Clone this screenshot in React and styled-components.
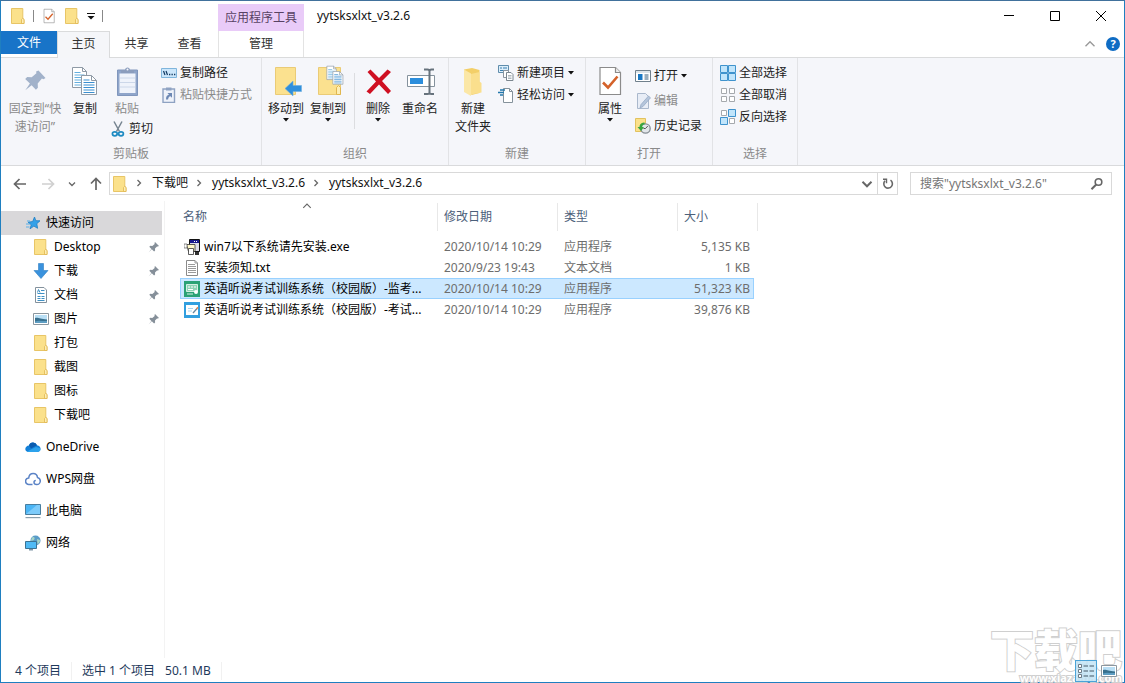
import { useState } from "react";
import styled, { createGlobalStyle, css } from "styled-components";

const GlobalStyle = createGlobalStyle`
  * {
    box-sizing: border-box;
  }
  body {
    margin: 0;
    background: #fff;
    color: #111;
    font: 12px/18px "Noto Sans", "Noto Sans CJK SC", sans-serif;
  }
  button {
    margin: 0;
    padding: 0;
    border: none;
    background: none;
    color: inherit;
    font: inherit;
  }
  svg {
    display: block;
    flex: none;
  }
`;

/* ---------- icons ---------- */

const FolderIcon = ({ size = 16 }) => (
  <svg width={size} height={size} viewBox="0 0 16 16">
    <path d="M1.5.5h11.3v10l1.2.8v4.2H1.5z" fill="#fbe18b" stroke="#e8c566" />
    <path d="M11.5 15.5v-4l1.2-1.2 1.3 1.2v4z" fill="#fdeeb5" stroke="#e0b64f" strokeWidth=".8" />
  </svg>
);

const PropsIcon = ({ size = 16 }) => (
  <svg width={size} height={size} viewBox="0 0 32 32">
    <path d="M6 2.500h15.500l5 5v22H6z" fill="#fff" stroke="#8b8b8b" strokeWidth="1.200" />
    <path d="M21.500 2.500v5h5" fill="#eee" stroke="#8b8b8b" strokeWidth="1.200" />
    <path d="M9 17.500l5 5 9.500-11" fill="none" stroke="#d4622a" strokeWidth="2.600" />
  </svg>
);

const CaretIcon = () => (
  <svg width="6" height="4" viewBox="0 0 6 4">
    <path d="M0 0h6L3 3.500z" fill="#111" />
  </svg>
);

const PinBigIcon = () => (
  <svg width="32" height="32" viewBox="0 0 32 32">
    <path d="M19.5 5.5l7 7.5-2 1.2-1.6-.6-4.2 5 .2 4.2-2 2-4.3-4.6-6.3 5 4.6-6.8-4.7-4.3 2-2 4.5.1 4.7-4-.3-1.7z" fill="#a2b2ca" />
  </svg>
);

const CopyPages = () => (
  <>
    <path d="M3.5 2.5h10l4 4v16h-14z" fill="#fff" stroke="#8f9aa6" />
    <path d="M13.5 2.5v4h4" fill="none" stroke="#8f9aa6" />
    <path d="M5.500 7.500h6M5.500 10h10M5.500 12.500h10M5.500 15h10M5.500 17.500h10M5.500 20h10" stroke="#64aede" />
    <path d="M12.500 10.500h10l5 5v14h-15z" fill="#fff" stroke="#8f9aa6" />
    <path d="M22.500 10.500v5h5" fill="none" stroke="#8f9aa6" />
    <path d="M14.500 15h6M14.500 17.500h11M14.500 20h11M14.500 22.500h11M14.500 25h11M14.500 27.500h11" stroke="#3b8fd0" />
  </>
);

const CopyIcon = () => (
  <svg width="32" height="32" viewBox="0 0 32 32"><CopyPages /></svg>
);

const PasteIcon = () => (
  <svg width="32" height="32" viewBox="0 0 32 32">
    <path d="M6.500 5h20v25.500h-20z" fill="#8fa5ca" stroke="#8096bc" />
    <path d="M8.500 8.500h16v19.500h-16z" fill="#eff3fb" />
    <path d="M9 13h15M9 17.500h15M9 22h15" stroke="#ccd7e9" />
    <path d="M10 8V5h4c0-3.500 5-3.500 5 0h4v3z" fill="#8b9dbd" />
    <circle cx="16.500" cy="4.500" r="1" fill="#f5f6fa" />
  </svg>
);

const CutIcon = () => (
  <svg width="16" height="16" viewBox="0 0 16 16" fill="none">
    <path d="M4 .5l5.500 10M12 .5L6.500 10.500" stroke="#75838f" strokeWidth="1.500" />
    <ellipse cx="4.800" cy="12.800" rx="2.400" ry="2" stroke="#1f8bc2" strokeWidth="1.700" />
    <ellipse cx="11" cy="12.800" rx="2.400" ry="2" stroke="#1f8bc2" strokeWidth="1.700" />
  </svg>
);

const CopyPathIcon = () => (
  <svg width="16" height="16" viewBox="0 0 16 16">
    <path d="M.5 3.500h15v9H.5z" fill="#cbe6fb" stroke="#7fb5dc" />
    <path d="M2.500 6l1.500 4M5 6l1.500 4" stroke="#123a63" strokeWidth="1.200" />
    <path d="M8 9.500h1.300M10.500 9.500h1.300M13 9.500h1.300" stroke="#123a63" strokeWidth="1.300" />
  </svg>
);

const PasteLinkIcon = () => (
  <svg width="16" height="16" viewBox="0 0 16 16">
    <path d="M2 2h11.500v13.500H2z" fill="#eef2fa" stroke="#8ea2c2" strokeWidth="1.400" />
    <path d="M5 .5h5.500v3H5z" fill="#8ea2c2" />
    <path d="M5 12.500c0-3 1-4.500 3-4.700L6.500 6H11v4.800L9.500 9.300c-1.500.3-2.200 1.300-2.400 3.200z" fill="#6d88b4" />
  </svg>
);

const MoveToIcon = () => (
  <svg width="34" height="32" viewBox="0 0 34 32">
    <path d="M6.500 2.500h20v27h-20z" fill="#fbe18f" stroke="#eacb76" />
    <path d="M16 23.500l8-7.500v4.500h8.500v6H24V31z" fill="#2f8fdc" stroke="#6eafdf" strokeWidth=".6" />
  </svg>
);

const CopyToIcon = () => (
  <svg width="32" height="32" viewBox="0 0 32 32">
    <path d="M6.500 2.500h22v27h-22z" fill="#fbe18f" stroke="#eacb76" />
    <path d="M24.500 29.500v-7l2-2 2 2v7z" fill="#fdeeb5" stroke="#e0b64f" />
    <g transform="translate(12.500 -.5) scale(.67)"><CopyPages /></g>
  </svg>
);

const DeleteIcon = () => (
  <svg width="32" height="32" viewBox="0 0 32 32">
    <path d="M5.500 7l3-2.500L17 13l8.500-8.500L29 7l-9 9 9 10-3 3-9-9.500L8 29l-3.500-2.500 9.500-10z" fill="#cf1022" />
  </svg>
);

const RenameIcon = () => (
  <svg width="32" height="32" viewBox="0 0 32 32" fill="none">
    <path d="M3.500 10.500h27v11h-27z" fill="#fff" stroke="#85929d" />
    <path d="M6 13h13v6H6z" fill="#2b8ddc" />
    <path d="M20 4.500h3.500c1.500 0 2 .5 2 1.500 0-1 .5-1.500 2-1.500H30M20 29h3.500c1.500 0 2-.5 2-1.500 0 1 .5 1.500 2 1.500H30M25.500 6v22" stroke="#66727c" strokeWidth="2" />
  </svg>
);

const NewFolderIcon = () => (
  <svg width="32" height="32" viewBox="0 0 32 32">
    <path d="M7 4.500l8-1.500 7.500 2v23l-8 2z" fill="#f3cf68" />
    <path d="M7 4.500l7 4V31l-7-4z" fill="#fbe7a6" />
    <path d="M14 9l8.500-2v9.500l2 1.500v9.500L14 29.500z" fill="#fadf8d" />
  </svg>
);

const NewItemIcon = () => (
  <svg width="16" height="16" viewBox="0 0 16 16">
    <path d="M.5.500h10v7H.5z" fill="#dceefa" stroke="#5f8dac" />
    <path d="M2 3h2M5 3h4M2 5.500h6" stroke="#3b7fb0" />
    <path d="M5.500 5.500h5v7h-5z" fill="#fff" stroke="#8b959e" />
    <path d="M8.500 7.500h4.500l2 2v6H8.500z" fill="#fff" stroke="#7b868f" />
    <path d="M10 10.500h3.500M10 12h3.500M10 13.500h3.500" stroke="#9aa4ac" strokeWidth=".8" />
  </svg>
);

const EasyAccessIcon = () => (
  <svg width="16" height="16" viewBox="0 0 16 16">
    <path d="M5.500 1.500h6l3 3v11h-9z" fill="#fff" stroke="#85929b" />
    <path d="M11.500 1.500v3h3" fill="none" stroke="#85929b" />
    <path d="M2 3h5M0 5.500h6M2 8h3" stroke="#2478ac" strokeWidth="1.300" />
  </svg>
);

const OpenIcon = () => (
  <svg width="16" height="16" viewBox="0 0 16 16">
    <path d="M.5 2.500h15v11H.5z" fill="#fff" stroke="#70808c" />
    <path d="M1 3h14v2H1z" fill="#dbe3e9" />
    <path d="M3 6h4.500v6H3z" fill="#1878c4" />
    <path d="M9.500 7h4M9.500 9h4M9.500 11h4" stroke="#335d7c" />
  </svg>
);

const EditIcon = () => (
  <svg width="16" height="16" viewBox="0 0 16 16">
    <path d="M2.500.500h8l3 3v12h-11z" fill="#e8edf6" stroke="#aab8cc" />
    <path d="M5 15l1-3.500L13.500 3l2 1.800L8 13.500z" fill="#b5c5db" stroke="#8fa5c2" strokeWidth=".7" />
  </svg>
);

const HistoryIcon = () => (
  <svg width="16" height="16" viewBox="0 0 16 16" fill="none">
    <path d="M.5.500h10v13H.5z" fill="#fbe18b" stroke="#e2c25e" />
    <circle cx="10.500" cy="10.500" r="4.700" fill="#e2e6ea" stroke="#858d94" strokeWidth="1.300" />
    <path d="M10.500 10.500l2.300-2.500M10.500 10.500h-2" stroke="#555" />
    <path d="M9.500 4.500c-3.500-.3-5 2-5 4.500H2.500l3.500 4 3-4H7.200c0-2 1-2.800 2.600-2.800z" fill="#37a53f" />
  </svg>
);

const squares = [[0, 0], [8, 0], [0, 8], [8, 8]];
const SelectIcon = ({ on }) => (
  <svg width="16" height="16" viewBox="0 0 16 16">
    {squares.map(([x, y], i) =>
      on[i] ? (
        <path key={i} d={`M${x + 0.5} ${y + 0.5}h7v7h-7z`} fill="#c1e5fb" stroke="#3f93cd" />
      ) : (
        <path key={i} d={`M${x + 1.5} ${y + 1.5}h5v5h-5z`} fill="#fff" stroke="#a5a9ad" />
      )
    )}
  </svg>
);

const ArrowIcon = ({ turn = 0, color = "#666" }) => (
  <svg width="16" height="16" viewBox="0 0 16 16">
    <path transform={`rotate(${turn} 8 8)`} d="M14 8H3M7.500 3L2.500 8l5 5" fill="none" stroke={color} strokeWidth="1.700" />
  </svg>
);

const ChevronIcon = ({ turn = 0, color = "#666", width = 1.3, size = 8 }) => (
  <svg width={size} height={size} viewBox="0 0 8 8">
    <path transform={`rotate(${turn} 4 4)`} d="M1 2.500l3 3 3-3" fill="none" stroke={color} strokeWidth={width} />
  </svg>
);

const RefreshIcon = () => (
  <svg width="14" height="14" viewBox="0 0 14 14" fill="none" stroke="#666" strokeWidth="1.600">
    <path d="M9.500 3.200A4.300 4.300 0 1 1 4 3.800" />
    <path d="M2 2.200h3.500v4" strokeWidth="1.400" />
  </svg>
);

const SearchIcon = () => (
  <svg width="14" height="14" viewBox="0 0 14 14" fill="none" stroke="#666">
    <circle cx="8.500" cy="5" r="3.300" strokeWidth="1.600" />
    <path d="M6.200 7.500L1.500 12.300" strokeWidth="2" />
  </svg>
);

const StarIcon = () => (
  <svg width="16" height="16" viewBox="0 0 16 16">
    <path d="M9.500 2l1.300 3.700 4.200.1-3.200 2.900.8 4.600-3.700-2.200L5 13.800l1.300-4L3 7.300l4.700-.8z" fill="#35a1e8" stroke="#1f7fc4" strokeWidth=".8" />
    <path d="M2 6h3M1 9h4M1 12h3.500" stroke="#5cb0e8" />
  </svg>
);

const PinIcon = () => (
  <svg width="12" height="12" viewBox="0 0 12 12">
    <path d="M7 1l4 4-1.200.6-.8-.2-2 2.200.1 2-1 1-2.300-2.300L.8 11.200l2.600-3.300L1.300 5.800l1-1 2 .1 2.400-2-.2-.9z" fill="#858f99" />
  </svg>
);

const DownloadIcon = () => (
  <svg width="16" height="16" viewBox="0 0 16 16">
    <path d="M5.500.500h5v7h4.500L8 15.500 1 7.500h4.500z" fill="#3a92dd" stroke="#2d7dc2" strokeWidth=".6" />
  </svg>
);

const DocumentIcon = () => (
  <svg width="16" height="16" viewBox="0 0 16 16">
    <path d="M2.500.500h8.500l2.500 2.500v12.500h-11z" fill="#fff" stroke="#83919c" />
    <path d="M8 3.500h3.500M4.500 6.500h7M4.500 9.500h3M4.500 11.500h3M4.500 13.500h7M8.500 9.500h3M8.500 11.500h3" stroke="#3f90c4" />
    <path d="M4.500 5.500l1-3 1.500 3" fill="none" stroke="#3f90c4" />
  </svg>
);

const PictureIcon = () => (
  <svg width="16" height="16" viewBox="0 0 16 16">
    <path d="M.5 2.500h15v11H.5z" fill="#fff" stroke="#8b979f" />
    <path d="M2 4h12v8H2z" fill="#b9dff5" />
    <path d="M2 7c3-1 5 1 12 1.500V12H2z" fill="#38708e" />
    <path d="M2 10.500c4-1.500 8 0 12-.5v2H2z" fill="#5d9dc2" />
  </svg>
);

const OneDriveIcon = () => (
  <svg width="16" height="16" viewBox="0 0 16 16">
    <path d="M4 6.500a4.200 4.200 0 0 1 8-.3c2.300.2 3.500 1.800 3.500 3.600 0 2-1.500 3.200-3.300 3.200H3.500C1.500 13 .3 11.600.3 10S1.800 6.600 4 6.500z" fill="#1380d8" />
    <path d="M4 6.500a4.200 4.200 0 0 1 8-.3L6 9.500z" fill="#0b5cb0" />
    <path d="M2 12.500L11 8c2.500.5 4.500 1 4.500 2 0 1.800-1.500 3-3.300 3H3.500c-.6 0-1-.2-1.500-.5z" fill="#2ca2ec" />
  </svg>
);

const WpsIcon = () => (
  <svg width="16" height="16" viewBox="0 0 16 16" fill="none" stroke="#5b83c6" strokeWidth="1.500">
    <path d="M7.500 13.500H4A3.200 3.200 0 0 1 3.700 7C4 4 6 2.500 8.200 2.500c2.300 0 4 1.600 4.300 4 1.800.4 2.800 1.700 2.800 3.400 0 2-1.600 3.600-3.600 3.600-1.700 0-2.700-1-2.700-2.300 0-1.200.8-1.800 1.800-1.800" />
  </svg>
);

const PcIcon = () => (
  <svg width="16" height="16" viewBox="0 0 16 16">
    <path d="M.5 1.500h15v10H.5z" fill="#4bb5f5" stroke="#497e9f" />
    <path d="M1 11L12 2h3v9z" fill="#7dcbfa" />
    <path d="M.5 14h15v1.200H.5z" fill="#8ca0ad" />
  </svg>
);

const NetworkIcon = () => (
  <svg width="16" height="16" viewBox="0 0 16 16">
    <circle cx="10.500" cy="5.500" r="5" fill="#5a9cc8" />
    <path d="M7 2.500c2-1.500 3 0 2.500 1.500S7 6 6 5.500zM12 4l3 1c0 2-1 3.500-2.500 4z" fill="#a8d5c5" />
    <path d="M.5 6.500h11v7H.5z" fill="#4fbaf5" stroke="#3b7394" />
    <path d="M4 14h4v1.500H4z" fill="#8097a6" />
  </svg>
);

const SetupIcon = () => (
  <svg width="16" height="16" viewBox="0 0 16 16">
    <path d="M5.500.500h10v12h-10z" fill="#dcdce6" stroke="#111" />
    <path d="M6 1h9v3H6z" fill="#17178c" />
    <path d="M10 2.500h1M12 2.500h1" stroke="#fff" />
    <path d="M2.500 5.500h8.500v7H4.500z" fill="#fff8c9" stroke="#333" strokeWidth=".8" />
    <path d="M0 5h3v4H0z" fill="#fff" stroke="#444" strokeWidth=".6" />
    <path d="M4.500 9.500h5v6h-5z" fill="#fff" stroke="#333" strokeWidth=".8" />
    <path d="M11 13h4v3h-4z" fill="#333" />
  </svg>
);

const TextFileIcon = () => (
  <svg width="16" height="16" viewBox="0 0 16 16">
    <path d="M2.500.500h8.500l2.500 2.500v12.500h-11z" fill="#fff" stroke="#8a8a8a" />
    <path d="M11 .5V3h2.500M4 4.500h7M4 6.500h8M4 8.500h8M4 10.500h8M4 12.500h8" fill="none" stroke="#9a9a9a" />
  </svg>
);

const TeacherIcon = () => (
  <svg width="16" height="16" viewBox="0 0 16 16">
    <path d="M0 0h16v16H0z" fill="#2ba275" />
    <path d="M2.500 3.500h11v7h-11z" fill="#8fd3b5" stroke="#d5f0e3" />
    <path d="M4 6h2M7 6h2M10 6h2M4 8.500h5" stroke="#fff" />
    <path d="M3 13h6" stroke="#d9f2e6" />
    <circle cx="12" cy="11" r="2" fill="#fff" />
  </svg>
);

const StudentIcon = () => (
  <svg width="16" height="16" viewBox="0 0 16 16">
    <path d="M0 0h16v16H0z" fill="#329fdf" />
    <path d="M2 3h12v10H2z" fill="#fff" />
    <path d="M4 6.500h5M4 9h4" stroke="#a9d5ef" />
    <path d="M9 11l4-4.500" stroke="#6687a0" strokeWidth="1.300" />
    <path d="M12.500 7l1.500-1.700" stroke="#e5814d" strokeWidth="1.500" />
  </svg>
);

const DetailsIcon = () => (
  <svg width="18" height="16" viewBox="0 0 18 16">
    {[1, 6, 11].map((y) => (
      <g key={y}>
        <path d={`M1.5 ${y + 0.5}h3v3h-3z`} fill="#fff" stroke="#6d7c88" />
        <path d={`M6.5 ${y + 2}h4.500M12.500 ${y + 2}h4.500`} stroke="#445867" />
      </g>
    ))}
  </svg>
);

/* ---------- data ---------- */

const quickItems = [
  { name: "Desktop", icon: <FolderIcon />, pinned: true },
  { name: "下载", icon: <DownloadIcon />, pinned: true },
  { name: "文档", icon: <DocumentIcon />, pinned: true },
  { name: "图片", icon: <PictureIcon />, pinned: true },
  { name: "打包", icon: <FolderIcon /> },
  { name: "截图", icon: <FolderIcon /> },
  { name: "图标", icon: <FolderIcon /> },
  { name: "下载吧", icon: <FolderIcon /> },
];

const places = [
  { name: "OneDrive", icon: <OneDriveIcon /> },
  { name: "WPS网盘", icon: <WpsIcon /> },
  { name: "此电脑", icon: <PcIcon /> },
  { name: "网络", icon: <NetworkIcon /> },
];

const files = [
  { name: "win7以下系统请先安装.exe", date: "2020/10/14 10:29", type: "应用程序", size: "5,135 KB", icon: <SetupIcon /> },
  { name: "安装须知.txt", date: "2020/9/23 19:43", type: "文本文档", size: "1 KB", icon: <TextFileIcon /> },
  { name: "英语听说考试训练系统（校园版）-监考...", date: "2020/10/14 10:29", type: "应用程序", size: "51,323 KB", icon: <TeacherIcon /> },
  { name: "英语听说考试训练系统（校园版）-考试...", date: "2020/10/14 10:29", type: "应用程序", size: "39,876 KB", icon: <StudentIcon /> },
];

const crumbs = ["下载吧", "yytsksxlxt_v3.2.6", "yytsksxlxt_v3.2.6"];

const Big = ({ icon, label, caret, disabled }) => (
  <BigButton type="button" disabled={disabled}>
    {icon}
    <span>{label}</span>
    {caret && <CaretIcon />}
  </BigButton>
);

const Small = ({ icon, label, caret, disabled }) => (
  <SmallButton type="button" disabled={disabled}>
    {icon}
    <span>{label}</span>
    {caret && <CaretIcon />}
  </SmallButton>
);

const App = () => {
  const [selected, setSelected] = useState(2);
  const [search, setSearch] = useState("");

  return (
    <Window>
      <GlobalStyle />
      <TitleBar>
        <QuickAccess>
          <FolderIcon />
          <QuickLine />
          <IconButton type="button" aria-label="属性"><PropsIcon /></IconButton>
          <IconButton type="button" aria-label="新建文件夹"><FolderIcon /></IconButton>
          <IconButton type="button" aria-label="自定义快速访问工具栏">
            <svg width="8" height="8" viewBox="0 0 8 8">
              <path d="M0 1.500h8" stroke="#111" />
              <path d="M.5 4h7L4 7.500z" fill="#111" />
            </svg>
          </IconButton>
          <QuickLine />
        </QuickAccess>
        <ToolLabel>应用程序工具</ToolLabel>
        <Title>yytsksxlxt_v3.2.6</Title>
        <WindowButton type="button" aria-label="最小化">
          <svg width="10" height="10" viewBox="0 0 10 10"><path d="M0 4.500h10" stroke="#000" /></svg>
        </WindowButton>
        <WindowButton type="button" aria-label="最大化">
          <svg width="10" height="10" viewBox="0 0 10 10"><path d="M.5.500h9v9h-9z" fill="none" stroke="#000" /></svg>
        </WindowButton>
        <WindowButton type="button" aria-label="关闭">
          <svg width="10" height="10" viewBox="0 0 10 10"><path d="M0 0l10 10M10 0L0 10" stroke="#000" /></svg>
        </WindowButton>
      </TitleBar>

      <Tabs>
        <FileTab type="button">文件</FileTab>
        <Tab type="button" $active>主页</Tab>
        <Tab type="button">共享</Tab>
        <Tab type="button">查看</Tab>
        <ToolTab type="button">管理</ToolTab>
        <TabsEnd>
          <IconButton type="button" aria-label="折叠功能区">
            <ChevronIcon turn={180} size={12} color="#999" width={0.9} />
          </IconButton>
          <HelpButton type="button">?</HelpButton>
        </TabsEnd>
      </Tabs>

      <Ribbon>
        <Group>
          <Tools $start={7}>
            <PinColumn><Big icon={<PinBigIcon />} label="固定到“快速访问”" disabled /></PinColumn>
            <Big icon={<CopyIcon />} label="复制" />
            <Column>
              <Big icon={<PasteIcon />} label="粘贴" disabled />
              <Small icon={<CutIcon />} label="剪切" />
            </Column>
            <Column>
              <Small icon={<CopyPathIcon />} label="复制路径" />
              <Small icon={<PasteLinkIcon />} label="粘贴快捷方式" disabled />
            </Column>
          </Tools>
          <GroupName>剪贴板</GroupName>
        </Group>
        <Group>
          <Tools $start={5}>
            <Big icon={<MoveToIcon />} label="移动到" caret />
            <Big icon={<CopyToIcon />} label="复制到" caret />
            <ToolLine />
            <Big icon={<DeleteIcon />} label="删除" caret />
            <Big icon={<RenameIcon />} label="重命名" />
          </Tools>
          <GroupName>组织</GroupName>
        </Group>
        <Group>
          <Tools $start={5}>
            <Big icon={<NewFolderIcon />} label={"新建\n文件夹"} />
            <Column>
              <Small icon={<NewItemIcon />} label="新建项目" caret />
              <Small icon={<EasyAccessIcon />} label="轻松访问" caret />
            </Column>
          </Tools>
          <GroupName>新建</GroupName>
        </Group>
        <Group>
          <Tools $start={5}>
            <Big icon={<PropsIcon size={32} />} label="属性" caret />
            <Column $loose>
              <Small icon={<OpenIcon />} label="打开" caret />
              <Small icon={<EditIcon />} label="编辑" disabled />
              <Small icon={<HistoryIcon />} label="历史记录" />
            </Column>
          </Tools>
          <GroupName>打开</GroupName>
        </Group>
        <Group>
          <Tools $start={5}>
            <Column>
              <Small icon={<SelectIcon on={[1, 1, 1, 1]} />} label="全部选择" />
              <Small icon={<SelectIcon on={[0, 0, 0, 0]} />} label="全部取消" />
              <Small icon={<SelectIcon on={[0, 1, 1, 0]} />} label="反向选择" />
            </Column>
          </Tools>
          <GroupName>选择</GroupName>
        </Group>
      </Ribbon>

      <AddressRow>
        <History>
          <IconButton type="button" aria-label="后退"><ArrowIcon /></IconButton>
          <IconButton type="button" aria-label="前进" disabled><ArrowIcon turn={180} color="#d0d0d0" /></IconButton>
          <IconButton type="button" aria-label="最近浏览的位置"><ChevronIcon /></IconButton>
          <IconButton type="button" aria-label="上移"><ArrowIcon turn={90} /></IconButton>
        </History>
        <AddressBar>
          <FolderIcon />
          {crumbs.map((crumb, index) => (
            <Crumb key={index}>
              <ChevronIcon turn={-90} />
              <button type="button">{crumb}</button>
            </Crumb>
          ))}
          <AddressEnd>
            <IconButton type="button" aria-label="以前的位置"><ChevronIcon size={12} /></IconButton>
            <RefreshButton type="button" aria-label="刷新"><RefreshIcon /></RefreshButton>
          </AddressEnd>
        </AddressBar>
        <SearchBox>
          <input
            type="text"
            aria-label="搜索"
            placeholder={'搜索"yytsksxlxt_v3.2.6"'}
            value={search}
            onChange={(e) => setSearch(e.target.value)}
          />
          <SearchIcon />
        </SearchBox>
      </AddressRow>

      <Body>
        <Side>
          <SideItem href="#quick" $active><StarIcon />快速访问</SideItem>
          {quickItems.map((item) => (
            <SideItem key={item.name} href="#folder" $nested>
              {item.icon}
              <span>{item.name}</span>
              {item.pinned && <PinIcon />}
            </SideItem>
          ))}
          {places.map((item) => (
            <SideItem key={item.name} href="#place" $apart>
              {item.icon}
              <span>{item.name}</span>
            </SideItem>
          ))}
        </Side>
        <Main>
          <FileTable>
            <colgroup>
              <col width="258" />
              <col width="120" />
              <col width="120" />
              <col width="76" />
            </colgroup>
            <thead>
              <tr>
                <th>
                  名称
                  <SortMark><ChevronIcon turn={180} size={10} width={0.9} /></SortMark>
                </th>
                <th>修改日期</th>
                <th>类型</th>
                <th>大小</th>
              </tr>
            </thead>
            <tbody>
              {files.map((file, index) => (
                <FileRow key={file.name} $selected={selected === index} onClick={() => setSelected(index)}>
                  <td><FileName>{file.icon}{file.name}</FileName></td>
                  <td>{file.date}</td>
                  <td>{file.type}</td>
                  <td>{file.size}</td>
                </FileRow>
              ))}
            </tbody>
          </FileTable>
        </Main>
      </Body>

      <StatusBar>
        <StatusText>4 个项目</StatusText>
        <StatusText><span>选中 1 个项目</span><span>50.1 MB</span></StatusText>
        <Views>
          <ViewButton type="button" aria-label="详细信息" $active><DetailsIcon /></ViewButton>
          <ViewButton type="button" aria-label="大图标"><PictureIcon /></ViewButton>
        </Views>
        <Watermark>
          <strong>下载吧</strong>
          <small>www.xiazaiba.com</small>
        </Watermark>
      </StatusBar>
    </Window>
  );
};

/* ---------- styles ---------- */

const Window = styled.div`
  display: flex;
  flex-direction: column;
  min-height: 100vh;
  border: 1px solid #1f7fc0;
  border-top-color: #41719c;
`;

const TitleBar = styled.header`
  display: flex;
  height: 30px;
`;

const QuickAccess = styled.div`
  display: flex;
  align-items: center;
  gap: 7px;
  width: 217px;
  padding-left: 9px;
`;

const QuickLine = styled.span`
  width: 1px;
  height: 12px;
  background: #888;
`;

const IconButton = styled.button`
  display: flex;
  align-items: center;
  justify-content: center;
`;

const ToolLabel = styled.div`
  width: 86px;
  margin-top: 3px;
  background: #e9cbf8;
  color: #574263;
  line-height: 27px;
  text-align: center;
`;

const Title = styled.div`
  flex: 1;
  padding-left: 13px;
  line-height: 30px;
`;

const WindowButton = styled.button`
  display: flex;
  align-items: center;
  justify-content: center;
  width: 46px;
`;

const Tabs = styled.nav`
  display: flex;
  height: 27px;
  border-bottom: 1px solid #dadbdc;
`;

const FileTab = styled.button`
  width: 56px;
  height: 23px;
  background: #1874c8;
  color: #fff;
`;

const Tab = styled.button`
  width: 53px;
  height: 27px;
  padding-bottom: 2px;
  color: #333;

  ${({ $active }) =>
    $active &&
    css`
      border: 1px solid #dadbdc;
      border-bottom: none;
      background: #f5f6f9;
    `}
`;

const ToolTab = styled(Tab)`
  width: 86px;
  height: 26px;
  margin-left: 2px;
  padding-bottom: 1px;
  border: 1px solid #e3e3e3;
  border-width: 0 1px;
`;

const TabsEnd = styled.div`
  display: flex;
  align-items: center;
  gap: 10px;
  margin-left: auto;
  padding-right: 4px;
`;

const HelpButton = styled.button`
  width: 14px;
  height: 14px;
  border-radius: 50%;
  background: #0f6cc4;
  color: #fff;
  font-size: 11px;
  font-weight: bold;
  line-height: 14px;
`;

const Ribbon = styled.section`
  display: flex;
  height: 108px;
  border-bottom: 1px solid #d9dadc;
  background: #f5f6fa;
`;

const Group = styled.div`
  display: flex;
  flex-direction: column;
  padding: 4px 0 2px;
  border-right: 1px solid #e2e3e6;

  &:nth-child(1) {
    width: 261px;
  }
  &:nth-child(2) {
    width: 187px;
  }
  &:nth-child(3) {
    width: 137px;
  }
  &:nth-child(4) {
    width: 127px;
  }
  &:nth-child(5) {
    width: 85px;
  }
`;

const Tools = styled.div`
  display: flex;
  flex: 1;
  gap: 4px;
  padding-left: ${({ $start }) => $start}px;
`;

const GroupName = styled.div`
  color: #8a8a8a;
  text-align: center;
`;

const BigButton = styled.button`
  display: flex;
  flex-direction: column;
  align-items: center;
  align-self: flex-start;
  width: 38px;
  padding-top: 3px;
  color: #222;
  white-space: pre-line;

  span {
    margin-top: 3px;
  }

  &:disabled {
    color: #8b8b8b;
  }
`;

const PinColumn = styled.div`
  ${BigButton} {
    width: 54px;
  }
`;

const SmallButton = styled.button`
  display: flex;
  align-items: center;
  gap: 3px;
  padding: 0 2px;
  color: #222;
  white-space: nowrap;

  &:disabled {
    color: #8b8b8b;
  }
`;

const Column = styled.div`
  display: flex;
  flex-direction: column;
  padding-top: ${({ $loose }) => ($loose ? "1px" : "0")};

  ${SmallButton} {
    height: ${({ $loose }) => ($loose ? "25px" : "22px")};
  }
`;

const ToolLine = styled.div`
  width: 1px;
  height: 56px;
  margin: 11px 0 0 3px;
  background: #dcdde0;
`;

const AddressRow = styled.div`
  display: flex;
  gap: 12px;
  padding: 6px 12px 6px 0;
`;

const History = styled.div`
  display: flex;
  align-items: center;
  justify-content: space-between;
  width: 92px;
  margin-left: 11px;
`;

const AddressBar = styled.div`
  display: flex;
  flex: 1;
  align-items: center;
  height: 23px;
  margin-left: -7px;
  padding-left: 2px;
  border: 1px solid #d9d9d9;
  line-height: 20px;
`;

const Crumb = styled.div`
  display: flex;
  align-items: center;
  gap: 9px;
  margin-left: 7px;
  padding-bottom: 2px;
`;

const AddressEnd = styled.div`
  display: flex;
  gap: 4px;
  height: 100%;
  margin-left: auto;
`;

const RefreshButton = styled(IconButton)`
  width: 20px;
  border-left: 1px solid #d9d9d9;
`;

const SearchBox = styled.label`
  display: flex;
  align-items: center;
  width: 202px;
  height: 23px;
  padding: 0 7px 0 9px;
  border: 1px solid #d9d9d9;

  input {
    flex: 1;
    min-width: 0;
    padding: 0;
    border: none;
    outline: none;
    font: inherit;
  }
  input::placeholder {
    color: #757575;
    opacity: 1;
  }
`;

const Body = styled.div`
  display: flex;
  flex: 1;
`;

const Side = styled.nav`
  width: 164px;
  padding: 10px 2px 0 0;
  border-right: 1px solid #f3f3f3;
`;

const SideItem = styled.a`
  display: flex;
  align-items: center;
  gap: 5px;
  height: 24px;
  margin-top: ${({ $apart }) => ($apart ? "8px" : "0")};
  padding: 0 2px 0 ${({ $nested }) => ($nested ? "32px" : "24px")};
  background: ${({ $active }) => ($active ? "#d9d8da" : "none")};
  color: #000;
  text-decoration: none;

  span {
    flex: 1;
  }
`;

const Main = styled.main`
  flex: 1;
  padding: 2px 0 0 15px;
`;

const FileTable = styled.table`
  width: 574px;
  table-layout: fixed;
  border-collapse: collapse;

  th {
    position: relative;
    height: 33px;
    padding: 0 0 5px 6px;
    color: #4c607a;
    font-weight: normal;
    text-align: left;
  }
  th:first-child {
    padding-left: 3px;
  }
  /* column dividers stop short of the rows */
  th::after {
    content: "";
    position: absolute;
    top: 0;
    right: 0;
    width: 1px;
    height: 28px;
    background: #e8e8e8;
  }
  th:last-child::after {
    right: -4px;
  }
`;

const SortMark = styled.span`
  position: absolute;
  top: -2px;
  left: 122px;
`;

const FileRow = styled.tr`
  td {
    height: 21px;
    padding: 0 0 0 6px;
    color: #6d6d6d;
    white-space: nowrap;
  }
  td:first-child {
    padding-left: 4px;
    color: #000;
  }
  td:last-child {
    padding-right: 4px;
    text-align: right;
  }

  ${({ $selected }) =>
    $selected &&
    css`
      background: #cce8ff;
      outline: 1px solid #99d1ff;
      outline-offset: -1px;
    `}
`;

const FileName = styled.div`
  display: flex;
  align-items: center;
  gap: 4px;
`;

const StatusBar = styled.footer`
  position: relative;
  display: flex;
  align-items: center;
  height: 24px;
  padding: 1px 0 0 4px;
  color: #1e395b;
`;

const StatusText = styled.div`
  display: flex;
  gap: 10px;
  padding: 0 10px;
  border-right: 1px solid #f1f1f1;
`;

const Views = styled.div`
  position: relative;
  z-index: 1;
  display: flex;
  gap: 2px;
  margin-left: auto;
  padding-right: 5px;
`;

const ViewButton = styled.button`
  display: flex;
  align-items: center;
  justify-content: center;
  height: 22px;
  padding: 0 1px;
  border: 1px solid ${({ $active }) => ($active ? "#4aa3d8" : "transparent")};
  background: ${({ $active }) => ($active ? "rgba(190, 226, 245, 0.8)" : "none")};
`;

/* outlined site mark in the corner, under the view buttons */
const Watermark = styled.div`
  position: absolute;
  right: 2px;
  bottom: 0;
  display: flex;
  flex-direction: column;
  align-items: flex-end;
  color: #fff;
  pointer-events: none;
  paint-order: stroke fill;

  strong {
    font-size: 44px;
    font-weight: 900;
    line-height: 46px;
    -webkit-text-stroke: 2px #cfcfcf;
  }
  small {
    font-size: 11px;
    font-weight: bold;
    line-height: 9px;
    -webkit-text-stroke: 2px #cfcfcf;
  }
`;

export default App;
